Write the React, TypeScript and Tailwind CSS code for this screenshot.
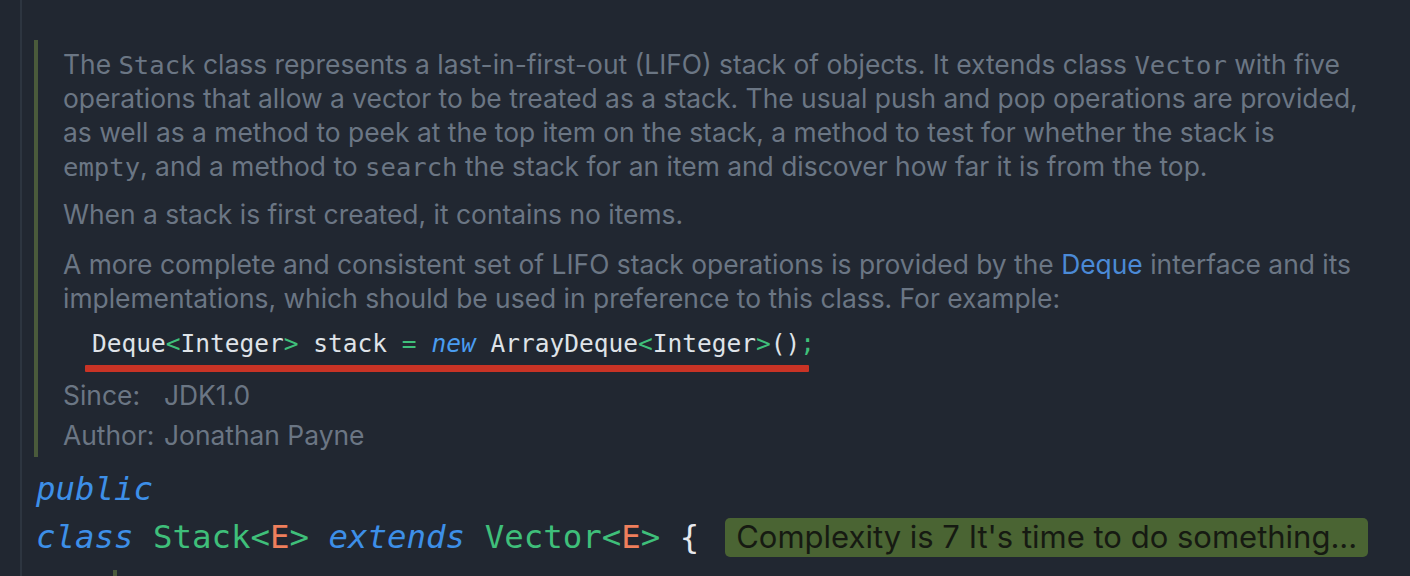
import React from "react";

const sans = "font-['Inter','Noto_Sans',sans-serif]";
const mono = "font-['DejaVu_Sans_Mono','Liberation_Mono',monospace]";

function M({ children }: { children: React.ReactNode }) {
  return <span className={`${mono} text-[25.6px] leading-none`}>{children}</span>;
}

export default function App() {
  return (
    <div className="w-[1410px] h-[576px] bg-[#212731] overflow-hidden flex">
      <div className="w-[20px] shrink-0" />
      <div className="w-[2px] shrink-0 bg-[#2d3540]" />
      <div className="flex-1 flex flex-col pl-[12px]">
        <div className="flex mt-[40px]">
          <div className="w-[4px] shrink-0 bg-[#4a5a3b]" />
          <div className={`${sans} pl-[25px] text-[#6b7684] text-[26.4px] leading-[34px] pt-[7px] pb-[5px] whitespace-nowrap`}>
            <p>
              The <M>Stack</M> class represents a last-in-first-out (LIFO) stack of objects. It extends class <M>Vector</M> with five
              <br />
              operations that allow a vector to be treated as a stack. The usual push and pop operations are provided,
              <br />
              as well as a method to peek at the top item on the stack, a method to test for whether the stack is
              <br />
              <M>empty</M>, and a method to <M>search</M> the stack for an item and discover how far it is from the top.
            </p>
            <p className="mt-[14px]">When a stack is first created, it contains no items.</p>
            <p className="mt-[16px]">
              A more complete and consistent set of LIFO stack operations is provided by the{" "}
              <span className="text-[#4b8ad6]">Deque</span> interface and its
              <br />
              implementations, which should be used in preference to this class. For example:
            </p>
            <div className="relative mt-[12px] pl-[29px]">
              <div className={`${mono} text-[24.5px] leading-[34px] text-[#dfe3e8] whitespace-pre`}>
                Deque<span className="text-[#3fbf7a]">&lt;</span>Integer<span className="text-[#3fbf7a]">&gt;</span> stack{" "}
                <span className="text-[#3fbf7a]">=</span> <span className="italic text-[#4a9cf0]">new</span> ArrayDeque
                <span className="text-[#3fbf7a]">&lt;</span>Integer<span className="text-[#3fbf7a]">&gt;</span>()
                <span className="text-[#3fbf7a]">;</span>
              </div>
              <div className="ml-[-7px] mt-[4px] h-[7px] w-[724px] bg-[#c93325] rounded-[1px]" />
            </div>
            <div className="mt-[6px] flex">
              <span className="w-[101px]">Since:</span>
              <span>JDK1.0</span>
            </div>
            <div className="mt-[6px] flex">
              <span className="w-[101px]">Author:</span>
              <span>Jonathan Payne</span>
            </div>
          </div>
        </div>
        <div className={`${mono} text-[32.4px] leading-[48px] mt-[8px] ml-[2px] whitespace-pre`}>
          <div className="italic text-[#3d8fe8]">public</div>
          <div className="flex items-center">
            <span className="italic text-[#3d8fe8]">class</span>
            <span> </span>
            <span className="text-[#3fbf7a]">Stack&lt;</span>
            <span className="text-[#ef7f5c]">E</span>
            <span className="text-[#3fbf7a]">&gt;</span>
            <span> </span>
            <span className="italic text-[#3d8fe8]">extends</span>
            <span> </span>
            <span className="text-[#3fbf7a]">Vector&lt;</span>
            <span className="text-[#ef7f5c]">E</span>
            <span className="text-[#3fbf7a]">&gt;</span>
            <span> </span>
            <span className="text-[#e6e9ee]">{"{"}</span>
            <span
              className={`${sans} ml-[26px] h-[39px] px-[11px] flex items-center rounded-[5px] bg-[#4a6433] text-[#161a12] text-[31px] not-italic`}
            >
              Complexity is 7 It's time to do something...
            </span>
          </div>
          <div className="ml-[77px] mt-[9px] w-[4px] h-[10px] bg-[#4a5a3b]" />
        </div>
      </div>
    </div>
  );
}
